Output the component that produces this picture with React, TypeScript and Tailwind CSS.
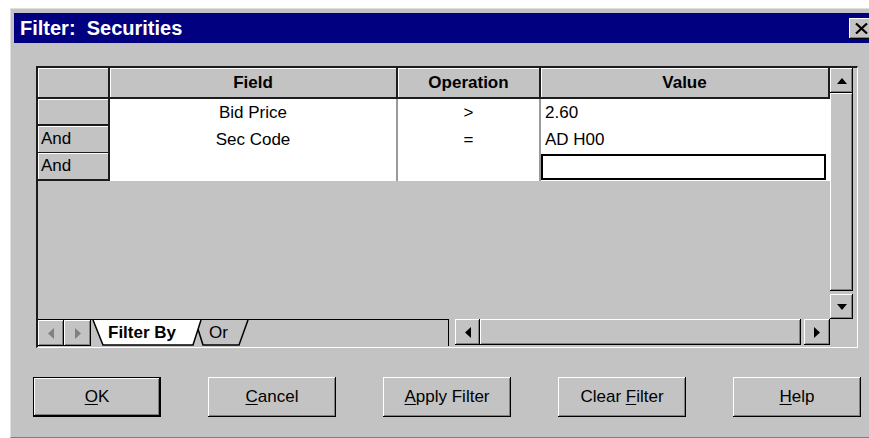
import React from "react";

// win95-style bevels
const raised =
  "bg-[#c3c3c3] shadow-[inset_-1px_-1px_0_#000,inset_1px_1px_0_#fff,inset_-2px_-2px_0_#808080]";
const raisedDefault =
  "bg-[#c3c3c3] shadow-[inset_0_0_0_1px_#000,inset_-2px_-2px_0_#000,inset_2px_2px_0_#fff,inset_-3px_-3px_0_#808080]";

type Row = { conj: string; field: string; op: string; value: string };

const rows: Row[] = [
  { conj: "", field: "Bid Price", op: ">", value: "2.60" },
  { conj: "And", field: "Sec Code", op: "=", value: "AD H00" },
  { conj: "And", field: "", op: "", value: "" },
];

type Dir = "up" | "down" | "left" | "right";

const Arrow = ({ dir, color = "#000" }: { dir: Dir; color?: string }) => {
  const vert = dir === "up" || dir === "down";
  const w = vert ? 10 : 6;
  const h = vert ? 6 : 11;
  const pts = {
    up: "0,6 5,0 10,6",
    down: "0,0 10,0 5,6",
    left: "6,0 6,11 0,5.5",
    right: "0,0 0,11 6,5.5",
  }[dir];
  return (
    <svg width={w} height={h} viewBox={`0 0 ${w} ${h}`}>
      <polygon points={pts} fill={color} />
    </svg>
  );
};

const Button = ({
  label,
  hot,
  isDefault,
}: {
  label: string;
  hot: number;
  isDefault?: boolean;
}) => (
  <div
    className={`w-[128px] h-[40px] flex items-center justify-center text-[17px] ${
      isDefault ? raisedDefault : raised
    }`}
  >
    <span>
      {label.slice(0, hot)}
      <span className="underline decoration-1 underline-offset-2">{label[hot]}</span>
      {label.slice(hot + 1)}
    </span>
  </div>
);

const App = () => {
  return (
    <div className="w-[869px] h-[438px] bg-white overflow-hidden font-['Liberation_Sans',Arial,sans-serif] text-black">
      <div className="ml-[10px] mt-[8px] w-[863px] h-[430px] bg-[#c3c3c3] border-l border-t border-[#dfdfdf] border-b border-b-[#808080] pl-[3px] pt-[4px] flex flex-col">
        {/* title bar */}
        <div className="h-[30px] bg-[#000080] flex items-center justify-between pl-[6px]">
          <span className="text-white font-bold text-[20px] whitespace-pre leading-none">
            {"Filter:  Securities"}
          </span>
          <div className={`w-[23px] h-[21px] mr-[1px] flex items-center justify-center pl-[2px] ${raised}`}>
            <svg width="13" height="11" viewBox="0 0 13 11">
              <path d="M1 0.5 L12 10.5 M12 0.5 L1 10.5" stroke="#000" strokeWidth="2.2" />
            </svg>
          </div>
        </div>

        {/* grid frame */}
        <div className="ml-[22px] mt-[23px] w-[822px] h-[282px] border-l-2 border-t-2 border-[#1c1c1c] border-r border-b border-r-white border-b-white flex flex-col">
          <div className="h-[251px] flex">
            <div className="w-[792px] flex flex-col">
              {/* header */}
              <div className="grid grid-cols-[72px_288px_143px_289px] h-[31px]">
                {["", "Field", "Operation", "Value"].map((h, i) => (
                  <div
                    key={i}
                    className="bg-[#c3c3c3] shadow-[inset_1px_1px_0_#fff] border-r-2 border-b-2 border-[#1c1c1c] flex items-center justify-center font-bold text-[17px]"
                  >
                    {h}
                  </div>
                ))}
              </div>
              {rows.map((r, i) => (
                <div key={i} className="grid grid-cols-[72px_288px_143px_289px] h-[27px] text-[17px]">
                  <div className="bg-[#c3c3c3] shadow-[inset_1px_1px_0_#fff] border-r-2 border-b-2 border-[#1c1c1c] flex items-center pl-[3px]">
                    {r.conj}
                  </div>
                  <div className="bg-white border-r-2 border-[#9a9a9a] flex items-center justify-center">
                    {r.field}
                  </div>
                  <div className="bg-white border-r-2 border-[#9a9a9a] flex items-center justify-center">
                    {r.op}
                  </div>
                  <div className="bg-white flex items-center pl-[4px]">
                    {i === 2 ? (
                      <div className="-ml-[4px] mt-[1px] w-full h-[26px] border-2 border-black" />
                    ) : (
                      r.value
                    )}
                  </div>
                </div>
              ))}
            </div>

            {/* vertical scrollbar */}
            <div className="w-[23px] flex flex-col">
              <div className={`h-[25px] flex items-center justify-center ${raised}`}>
                <Arrow dir="up" />
              </div>
              <div className={`flex-1 mb-[3px] ${raised}`} />
              <div className={`h-[25px] flex items-center justify-center ${raised}`}>
                <Arrow dir="down" />
              </div>
            </div>
          </div>

          {/* tabs + horizontal scrollbar */}
          <div className="h-[27px] flex">
            <div className="w-[411px] h-[27px] border-t border-r border-black flex">
              <div className={`w-[26px] h-[26px] flex items-center justify-center ${raised}`}>
                <Arrow dir="left" color="#808080" />
              </div>
              <div className={`w-[27px] h-[26px] flex items-center justify-center ${raised}`}>
                <Arrow dir="right" color="#808080" />
              </div>
              <div className="relative w-[357px] h-[26px]">
                <svg width="357" height="26" viewBox="0 0 357 26" className="absolute left-0 top-0">
                  <path d="M106 6 L112 25 L148 25 L157 0" fill="#c3c3c3" stroke="#000" strokeWidth="1.5" />
                  <polygon points="2,0 12,25 102,25 110,0" fill="#fff" />
                  <path d="M2 0 L12 25 L102 25 L110 0" fill="none" stroke="#000" strokeWidth="1.5" />
                </svg>
                <span className="absolute left-[17px] top-[3px] font-bold text-[17px] leading-[20px]">Filter By</span>
                <span className="absolute left-[118px] top-[3px] text-[17px] leading-[20px]">Or</span>
              </div>
            </div>
            <div className="w-[6px]" />
            <div className="w-[375px] h-[26px] flex">
              <div className={`w-[25px] flex items-center justify-center ${raised}`}>
                <Arrow dir="left" />
              </div>
              <div className={`flex-1 mr-[3px] ${raised}`} />
              <div className={`w-[26px] flex items-center justify-center ${raised}`}>
                <Arrow dir="right" />
              </div>
            </div>
          </div>
        </div>

        {/* dialog buttons */}
        <div className="flex gap-[47px] pl-[19px] mt-[29px]">
          <Button label="OK" hot={0} isDefault />
          <Button label="Cancel" hot={0} />
          <Button label="Apply Filter" hot={0} />
          <Button label="Clear Filter" hot={6} />
          <Button label="Help" hot={0} />
        </div>
      </div>
    </div>
  );
};

export default App;
